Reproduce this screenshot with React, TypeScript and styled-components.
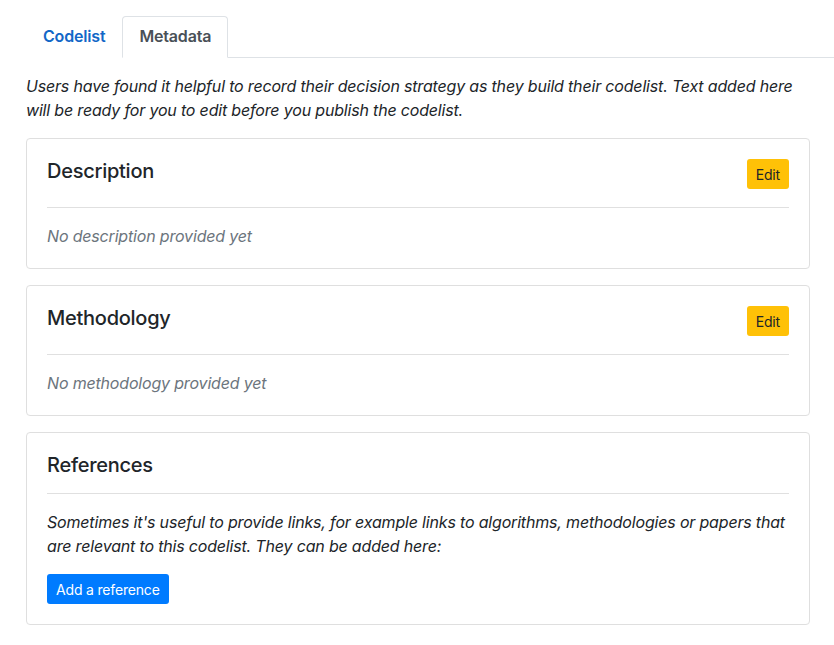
import React from "react";
import styled, { createGlobalStyle } from "styled-components";

const GlobalStyle = createGlobalStyle`
  html, body {
    margin: 0;
    padding: 0;
    background: #ffffff;
  }
  body {
    font-family: Inter, "Noto Sans", "Liberation Sans", sans-serif;
    font-size: 16px;
    line-height: 1.5;
    letter-spacing: -0.011em;
    color: #212529;
    overflow: hidden;
  }
  * {
    box-sizing: border-box;
  }
`;

const Page = styled.div`
  padding: 16px 24px 0 26px;
  width: 834px;
`;

const TabList = styled.ul`
  display: flex;
  list-style: none;
  margin: 0 -24px 0 0;
  padding: 0;
  border-bottom: 1px solid #dee2e6;
`;

const Tab = styled.li<{ $active?: boolean }>`
  margin-bottom: -1px;
  padding: 7px 16px 9px;
  font-weight: 600;
  font-size: 16px;
  line-height: 24px;
  color: ${(p) => (p.$active ? "#495057" : "#1267c7")};
  background: #ffffff;
  border: 1px solid ${(p) => (p.$active ? "#dee2e6" : "transparent")};
  border-bottom-color: ${(p) => (p.$active ? "#ffffff" : "transparent")};
  border-radius: 4px 4px 0 0;
  cursor: pointer;
`;

const Intro = styled.p`
  margin: 16px 0;
  font-style: italic;
`;

const Card = styled.section`
  border: 1px solid #dfdfdf;
  border-radius: 4px;
  padding: 20px;
  margin-bottom: 16px;
`;

const CardHeader = styled.div<{ $withAction?: boolean }>`
  display: flex;
  align-items: flex-start;
  justify-content: space-between;
  min-height: ${(p) => (p.$withAction ? "32px" : "24px")};
`;

const CardTitle = styled.h3`
  margin: 0;
  font-size: 20px;
  font-weight: 500;
  line-height: 24px;
  letter-spacing: -0.013em;
  color: #212529;
`;

const Divider = styled.hr`
  margin: 16px 0;
  border: 0;
  border-top: 1px solid #e0e0e0;
`;

const Note = styled.p<{ $muted?: boolean }>`
  margin: 0 0 16px;
  font-style: italic;
  color: ${(p) => (p.$muted ? "#6c757d" : "#212529")};
  &:last-child {
    margin-bottom: 0;
  }
`;

const Button = styled.button<{ $variant: "warning" | "primary" }>`
  height: 30px;
  padding: 0 8px;
  font-family: inherit;
  font-size: 14px;
  line-height: 21px;
  letter-spacing: inherit;
  border: 1px solid transparent;
  border-radius: 3px;
  cursor: pointer;
  background: ${(p) => (p.$variant === "warning" ? "#ffc107" : "#007bff")};
  color: ${(p) => (p.$variant === "warning" ? "#212529" : "#ffffff")};
`;

interface SectionProps {
  title: string;
  empty: string;
}

const MetadataSection = ({ title, empty }: SectionProps) => (
  <Card>
    <CardHeader $withAction>
      <CardTitle>{title}</CardTitle>
      <Button $variant="warning">Edit</Button>
    </CardHeader>
    <Divider />
    <Note $muted>{empty}</Note>
  </Card>
);

const App = () => {
  return (
    <>
      <GlobalStyle />
      <Page>
        <TabList>
          <Tab>Codelist</Tab>
          <Tab $active>Metadata</Tab>
        </TabList>
        <Intro>
          Users have found it helpful to record their decision strategy as they
          build their codelist. Text added here will be ready for you to edit
          before you publish the codelist.
        </Intro>
        <MetadataSection title="Description" empty="No description provided yet" />
        <MetadataSection title="Methodology" empty="No methodology provided yet" />
        <Card>
          <CardHeader>
            <CardTitle>References</CardTitle>
          </CardHeader>
          <Divider />
          <Note>
            Sometimes it's useful to provide links, for example links to
            algorithms, methodologies or papers that are relevant to this
            codelist. They can be added here:
          </Note>
          <Button $variant="primary">Add a reference</Button>
        </Card>
      </Page>
    </>
  );
};

export default App;
